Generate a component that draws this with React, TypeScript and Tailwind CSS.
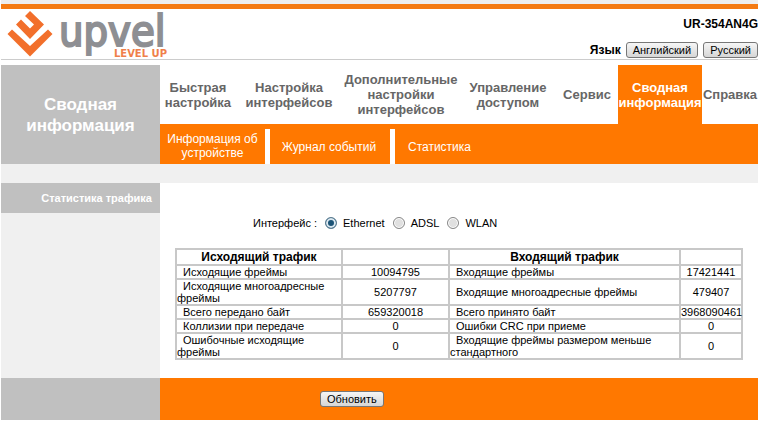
import type { ReactNode } from "react";

const menu = [
  { label: "Быстрая настройка" },
  { label: "Настройка интерфейсов" },
  { label: "Дополнительные настройки интерфейсов" },
  { label: "Управление доступом" },
  { label: "Сервис" },
  { label: "Сводная информация", active: true },
  { label: "Справка" },
];

const interfaces = ["Ethernet", "ADSL", "WLAN"];

const rows = [
  ["Исходящие фреймы", "10094795", "Входящие фреймы", "17421441"],
  ["Исходящие многоадресные фреймы", "5207797", "Входящие многоадресные фреймы", "479407"],
  ["Всего передано байт", "659320018", "Всего принято байт", "3968090461"],
  ["Коллизии при передаче", "0", "Ошибки CRC при приеме", "0"],
  ["Ошибочные исходящие фреймы", "0", "Входящие фреймы размером меньше стандартного", "0"],
];

function Logo() {
  return (
    <svg width="166" height="50" viewBox="0 0 166 50" role="img" aria-label="upvel level up" className="overflow-visible">
      <g fill="#f26f2b">
        <path d="M0.5 25 L5 20.5 L23 37 L41 20.5 L45.5 25 L23 47.5 Z" />
        <path d="M23 2 L37 15.5 L23 30 L9 15.5 L14 10.5 L23 19.5 L27 15.5 L18 7 Z" />
      </g>
      <text x="52" y="37" fontSize="43" fill="#8e8f93" stroke="#8e8f93" strokeWidth="2" className="font-['DejaVu_Sans_Condensed','DejaVu_Sans',sans-serif]">
        upvel
      </text>
      <text x="160" y="48" fontSize="10" textAnchor="end" fontWeight="bold" fill="#f07f4a" className="font-['DejaVu_Sans',sans-serif]">
        LEVEL UP
      </text>
    </svg>
  );
}

function Button({ children }: { children: ReactNode }) {
  return (
    <button
      type="button"
      className="block h-4 rounded-[3px] border border-[#777] bg-linear-to-b from-[#f6f6f6] to-[#d6d6d6] px-1.5 text-[11px] leading-3 text-black"
    >
      {children}
    </button>
  );
}

export default function App() {
  return (
    <div className="bg-white pr-0.5 pl-px font-['Liberation_Sans',Arial,sans-serif] text-[11px] leading-3 text-black">
      <div className="h-1 bg-[#eee]" />
      <header className="flex justify-between border-t-5 border-b border-t-[#f47a12] border-b-[#ccc]">
        <div className="h-[50px] pl-1.5">
          <Logo />
        </div>
        <div className="flex flex-col items-end justify-between pt-[7px] pb-px">
          <div className="text-xs font-bold">UR-354AN4G</div>
          <div className="flex items-center gap-[5px]">
            <span className="text-xs font-bold">Язык</span>
            <Button>Английский</Button>
            <Button>Русский</Button>
          </div>
        </div>
      </header>

      <div className="mt-[5px] flex">
        <h1 className="flex w-[21%] shrink-0 items-center justify-center bg-[#c0c0c0] px-4 text-center text-[17px] leading-[21px] font-bold text-white">
          Сводная информация
        </h1>
        <div className="flex-1">
          <nav className="grid h-[59px] grid-cols-[76fr_106fr_118fr_96fr_62fr_84fr_56fr] text-center text-[13px] leading-[15px] font-bold text-[#666]">
            {menu.map((item) => (
              <a
                key={item.label}
                href="#"
                className={`flex items-center justify-center ${item.active ? "bg-[#ff7800] text-white" : ""}`}
              >
                {item.label}
              </a>
            ))}
          </nav>
          <nav className="flex h-10 bg-[#ff7800] pt-[5px] text-center text-xs leading-[14px] text-white">
            <a href="#" className="flex w-[105px] items-center justify-center pb-0.5">
              Информация об устройстве
            </a>
            <a href="#" className="flex w-[125px] items-center justify-center border-l-5 border-white pr-0.5">
              Журнал событий
            </a>
            <a href="#" className="flex items-center border-l-5 border-white pl-[13px]">
              Статистика
            </a>
          </nav>
        </div>
      </div>

      <div className="h-[19px] bg-[#f0f0f0]" />

      <div className="flex">
        <aside className="w-[21%] shrink-0 bg-[#f0f0f0]">
          <h2 className="bg-[#c0c0c0] py-[9px] pr-2 text-right font-bold text-white">Статистика трафика</h2>
        </aside>
        <main className="flex-1 pt-[34px] pr-[15px] pb-[18px] pl-[15px]">
          <fieldset className="flex items-center pl-[78px]">
            <legend className="float-left pr-2">Интерфейс :</legend>
            {interfaces.map((name) => (
              <label key={name} className="flex items-center gap-1.5 pr-2">
                <input
                  type="radio"
                  name="interface"
                  defaultChecked={name === "Ethernet"}
                  className="size-3 appearance-none rounded-full border border-[#888] bg-[#e0e0e0] shadow-[inset_0_0_0_1px_#fff] checked:border-[#5f7f93] checked:bg-[#1b5376] checked:shadow-[inset_0_0_0_2px_#dbe8f0]"
                />
                {name}
              </label>
            ))}
          </fieldset>

          <table className="mt-[19px] w-full table-fixed border-collapse border-2 border-[#c8c8c8] [&_td]:border-2 [&_td]:border-[#c8c8c8] [&_th]:border-2 [&_th]:border-[#c8c8c8]">
            <colgroup>
              <col className="w-[166px]" />
              <col className="w-[107px]" />
              <col />
              <col className="w-[62px]" />
            </colgroup>
            <thead>
              <tr className="text-xs leading-[14px]">
                <th>Исходящий трафик</th>
                <th />
                <th>Входящий трафик</th>
                <th />
              </tr>
            </thead>
            <tbody>
              {rows.map(([outLabel, outValue, inLabel, inValue]) => (
                <tr key={outLabel}>
                  <td className="indent-1.5">{outLabel}</td>
                  <td className="text-center">{outValue}</td>
                  <td className="indent-1.5">{inLabel}</td>
                  <td className="text-center">{inValue}</td>
                </tr>
              ))}
            </tbody>
          </table>
        </main>
      </div>

      <footer className="flex">
        <div className="w-[21%] shrink-0 bg-[#c0c0c0]" />
        <div className="flex-1 bg-[#ff7800] py-[13px] pl-40">
          <Button>Обновить</Button>
        </div>
      </footer>
    </div>
  );
}
